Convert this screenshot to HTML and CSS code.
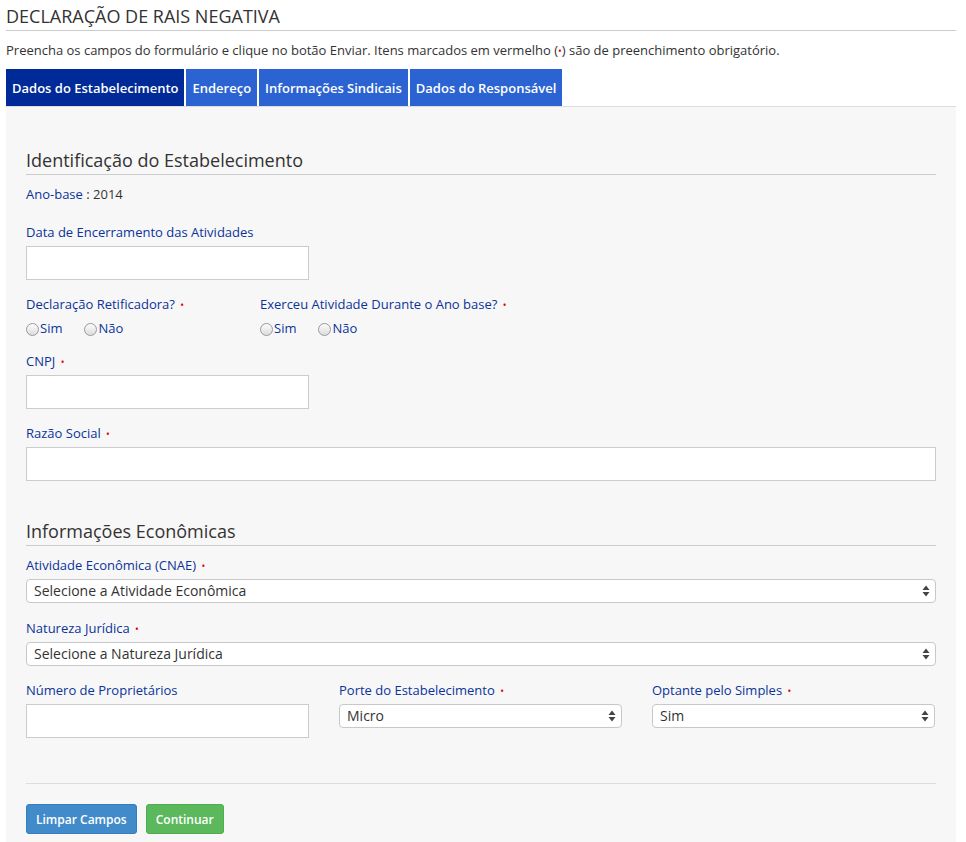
FILE: index.html
```html
<!DOCTYPE html>
<html lang="pt-BR">
<head>
<meta charset="utf-8">
<title>Declaração de RAIS Negativa</title>
<link rel="stylesheet" href="styles.css">
</head>
<body>
<div class="page">
  <h1 class="title">DECLARAÇÃO DE RAIS NEGATIVA</h1>
  <p class="intro">Preencha os campos do formulário e clique no botão Enviar. Itens marcados em vermelho (<span class="req-dot">•</span>) são de preenchimento obrigatório.</p>
  <nav class="tabs">
    <a class="tab active">Dados do Estabelecimento</a>
    <a class="tab">Endereço</a>
    <a class="tab">Informações Sindicais</a>
    <a class="tab">Dados do Responsável</a>
  </nav>
  <form class="panel">
    <h2 class="section-title">Identificação do Estabelecimento</h2>
    <div class="ano-base"><span class="lbl">Ano-base</span> : 2014</div>

    <div class="field">
      <label class="lbl">Data de Encerramento das Atividades</label>
      <input class="text-input short" type="text">
    </div>

    <div class="radio-row">
      <div class="radio-group first">
        <div class="lbl">Declaração Retificadora? <span class="req">•</span></div>
        <div class="radios">
          <label class="radio"><input type="radio" name="ret">Sim</label>
          <label class="radio"><input type="radio" name="ret">Não</label>
        </div>
      </div>
      <div class="radio-group">
        <div class="lbl">Exerceu Atividade Durante o Ano base? <span class="req">•</span></div>
        <div class="radios">
          <label class="radio"><input type="radio" name="ex">Sim</label>
          <label class="radio"><input type="radio" name="ex">Não</label>
        </div>
      </div>
    </div>

    <div class="field">
      <label class="lbl">CNPJ <span class="req">•</span></label>
      <input class="text-input short" type="text">
    </div>

    <div class="field">
      <label class="lbl">Razão Social <span class="req">•</span></label>
      <input class="text-input" type="text">
    </div>

    <h2 class="section-title second">Informações Econômicas</h2>

    <div class="field sel-field first-sel">
      <label class="lbl">Atividade Econômica (CNAE) <span class="req">•</span></label>
      <div class="select-wrap">
        <select class="select"><option>Selecione a Atividade Econômica</option></select>
        <svg class="arrows" width="8" height="12" viewBox="0 0 8 12"><path d="M4 0.5 L7.5 5 L0.5 5 Z M4 11.5 L7.5 7 L0.5 7 Z" fill="#444"/></svg>
      </div>
    </div>

    <div class="field sel-field">
      <label class="lbl">Natureza Jurídica <span class="req">•</span></label>
      <div class="select-wrap">
        <select class="select"><option>Selecione a Natureza Jurídica</option></select>
        <svg class="arrows" width="8" height="12" viewBox="0 0 8 12"><path d="M4 0.5 L7.5 5 L0.5 5 Z M4 11.5 L7.5 7 L0.5 7 Z" fill="#444"/></svg>
      </div>
    </div>

    <div class="grid3">
      <div class="col">
        <label class="lbl">Número de Proprietários</label>
        <input class="text-input" type="text">
      </div>
      <div class="col">
        <label class="lbl">Porte do Estabelecimento <span class="req">•</span></label>
        <div class="select-wrap">
          <select class="select"><option>Micro</option></select>
          <svg class="arrows" width="8" height="12" viewBox="0 0 8 12"><path d="M4 0.5 L7.5 5 L0.5 5 Z M4 11.5 L7.5 7 L0.5 7 Z" fill="#444"/></svg>
        </div>
      </div>
      <div class="col">
        <label class="lbl">Optante pelo Simples <span class="req">•</span></label>
        <div class="select-wrap">
          <select class="select"><option>Sim</option></select>
          <svg class="arrows" width="8" height="12" viewBox="0 0 8 12"><path d="M4 0.5 L7.5 5 L0.5 5 Z M4 11.5 L7.5 7 L0.5 7 Z" fill="#444"/></svg>
        </div>
      </div>
    </div>

    <hr class="divider">

    <div class="actions">
      <button type="button" class="btn btn-blue">Limpar Campos</button>
      <button type="button" class="btn btn-green">Continuar</button>
    </div>
  </form>
</div>
</body>
</html>
```
FILE: styles.css
```css
* { box-sizing: border-box; }
html, body { margin: 0; padding: 0; background: #fff; }
body {
  font-family: "Open Sans", "Noto Sans", sans-serif;
  color: #333;
  font-size: 13px;
}
.page {
  width: 950px;
  margin-left: 6px;
}
.title {
  margin: 0;
  padding-top: 4px;
  padding-bottom: 2px;
  font-size: 18px;
  line-height: 24px;
  font-weight: 400;
  color: #333;
  border-bottom: 1px solid #ccc;
}
.intro {
  margin: 10px 0 10px;
  line-height: 18px;
  font-size: 13px;
  color: #333;
}
.req-dot, .req { color: #e00000; font-size: 10px; line-height: 10px; }
.req { margin-left: 2px; }
.tabs {
  display: flex;
  gap: 2px;
  height: 37px;
}
.tab {
  display: flex;
  align-items: center;
  padding: 0 6px;
  background: #2b64d2;
  color: #fff;
  font-weight: 600;
  font-size: 13px;
  text-decoration: none;
}
.tab.active { background: #002a97; }
.panel {
  background: #f7f7f7;
  border-top: 1px solid #ddd;
  padding: 41px 20px 8px 20px;
  margin: 0;
}
.section-title {
  margin: 0;
  font-size: 18px;
  line-height: 24px;
  font-weight: 400;
  color: #333;
  padding-bottom: 2px;
  border-bottom: 1px solid #ccc;
}
.section-title.second { margin-top: 38px; }
.lbl {
  display: block;
  color: #0b3399;
  line-height: 18px;
  font-size: 13px;
}
.ano-base {
  margin-top: 10px;
  line-height: 18px;
}
.ano-base .lbl { display: inline; }
.field { margin-top: 15px; }
.ano-base + .field { margin-top: 20px; }
.field .lbl { margin-bottom: 5px; }
.text-input {
  display: block;
  width: 100%;
  height: 34px;
  border: 1px solid #ccc;
  background: #fff;
  border-radius: 0;
  padding: 4px 8px;
  font: inherit;
}
.text-input.short { width: 283px; }
.radio-row {
  display: flex;
  margin-top: 15px;
}
.radio-group.first { width: 234px; }
.radios {
  display: flex;
  gap: 22px;
  margin-top: 6px;
  line-height: 18px;
  height: 18px;
}
.radio {
  display: flex;
  align-items: center;
  color: #0b3399;
}
.radio input {
  appearance: none;
  -webkit-appearance: none;
  margin: 2px 1px 0 0;
  width: 13px;
  height: 13px;
  border-radius: 50%;
  border: 1px solid #9a9a9a;
  background: linear-gradient(#fcfcfc, #dcdcdc);
}
.radio-row + .field { margin-top: 15px; }
.sel-field { margin-top: 16px; }
.sel-field.first-sel { margin-top: 10px; }
.sel-field .lbl { margin-bottom: 5px; }
.select-wrap { position: relative; }
.select {
  appearance: none;
  -webkit-appearance: none;
  display: block;
  width: 100%;
  height: 24px;
  border: 1px solid #c8c8c8;
  border-radius: 4px;
  background: #fff;
  font-family: "Open Sans", "Noto Sans", sans-serif;
  font-size: 14px;
  color: #333;
  padding: 0 24px 0 7px;
  line-height: 22px;
}
.arrows {
  position: absolute;
  right: 6px;
  top: 6px;
  pointer-events: none;
}
.grid3 {
  display: grid;
  grid-template-columns: 283px 283px 283px;
  column-gap: 30px;
  margin-top: 15px;
}
.grid3 .lbl { margin-bottom: 5px; }
.divider {
  border: 0;
  border-top: 1px solid #ddd;
  margin: 45px 0 20px;
}
.actions { display: flex; gap: 9px; }
.btn {
  height: 30px;
  padding: 0 9px;
  border-radius: 3px;
  color: #fff;
  font-family: "Open Sans", "Noto Sans", sans-serif;
  font-size: 12px;
  font-weight: 600;
  cursor: pointer;
}
.btn-blue { background: #428bca; border: 1px solid #357ebd; }
.btn-green { background: #5cb85c; border: 1px solid #4cae4c; }
```
